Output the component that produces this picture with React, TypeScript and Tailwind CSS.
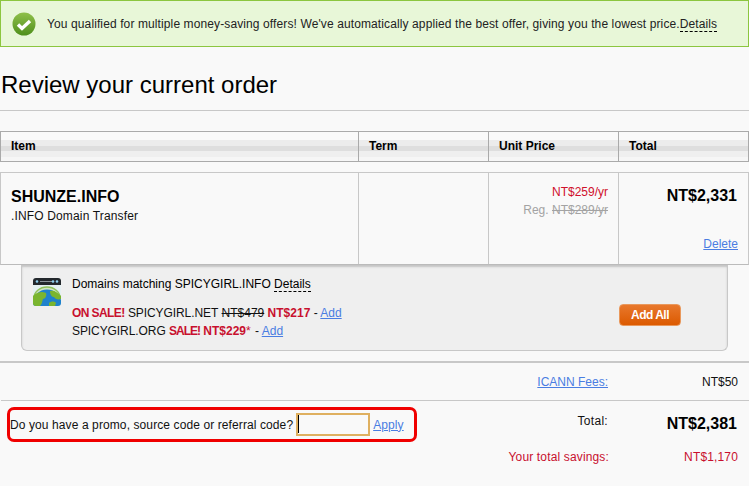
import React from "react";

const CheckIcon = () => (
  <svg width="24" height="24" viewBox="0 0 24 24">
    <defs>
      <linearGradient id="chk" x1="0" y1="0" x2="0" y2="1">
        <stop offset="0" stopColor="#8fc04a" />
        <stop offset="1" stopColor="#4f8f1c" />
      </linearGradient>
    </defs>
    <circle cx="12" cy="12" r="11.5" fill="url(#chk)" />
    <path d="M6 12.5l4 4 8-7.5" fill="none" stroke="#fff" strokeWidth="3.4" />
  </svg>
);

const GlobeIcon = () => (
  <svg width="28" height="28" viewBox="0 0 28 28">
    <defs>
      <clipPath id="win">
        <rect x="0" y="0" width="28" height="28" rx="3" />
      </clipPath>
    </defs>
    <g clipPath="url(#win)">
      <rect width="28" height="28" fill="#e4f0f2" />
      <rect width="28" height="7" fill="#23282c" />
      <circle cx="4" cy="3.5" r="1.3" fill="#8fd0f0" />
      <rect x="7" y="3" width="12" height="1" fill="#8a9398" />
      <circle cx="20" cy="3.5" r="1.3" fill="#8fd0f0" />
      <circle cx="24" cy="3.5" r="1.3" fill="#8fd0f0" />
      <path d="M1 20a13 11 0 0 1 26 0" fill="#cfe5c0" stroke="#8fc25a" strokeWidth="1.5" />
      <circle cx="14" cy="26" r="14.5" fill="#1f82cc" />
      <path d="M0 18c4-4 9-5 13-3 1 3-1 6-3 6-1 3-1 5-3 7H0zM17 13c4-1 7 1 11 5v3c-3 1-6 0-7-2-2 0-4-2-4-6zM16 25c2-2 6-2 7 0l-1 3h-6z" fill="#7ab52f" />
    </g>
  </svg>
);

const Link = ({ children }: { children: React.ReactNode }) => (
  <a className="text-[#4a7de2] underline cursor-pointer">{children}</a>
);

const Details = () => (
  <span className="border-b border-dashed border-black leading-[13px] inline-block">Details</span>
);

export default function App() {
  return (
    <div className="w-[749px] h-[486px] overflow-hidden bg-[#f9f9f9] text-[12px] text-[#111] font-['Liberation_Sans',Arial,sans-serif]">
      {/* offer banner */}
      <div className="h-[47px] flex items-center bg-[#e8f7d8] border border-[#8cc63f] pl-[11px] text-[#222] tracking-[0.11px]">
        <CheckIcon />
        <span className="ml-[11px] whitespace-nowrap">
          You qualified for multiple money-saving offers! We've automatically applied the best offer, giving you the lowest price.
          <Details />
        </span>
      </div>

      <h1 className="mt-[24px] h-[39px] pl-[1px] text-[24px] leading-[28px] text-black">Review your current order</h1>
      <div className="border-t border-[#c8c8c8]" />

      {/* table header */}
      <div className="mt-[20px] h-[31px] grid grid-cols-[357px_130px_130px_1fr] border border-[#aaa] font-bold text-black bg-[linear-gradient(#f9f9f9_0,#f9f9f9_8px,#ececec_8px,#ececec_14px,#dedede_14px,#dedede_19px,#efefef_19px,#efefef_25px,#f6f6f6_25px,#f6f6f6_100%)]">
        <div className="pl-[10px] pt-[5px]">Item</div>
        <div className="pl-[10px] pt-[5px] border-l border-[#aaa]">Term</div>
        <div className="pl-[10px] pt-[5px] border-l border-[#aaa]">Unit Price</div>
        <div className="pl-[10px] pt-[5px] border-l border-[#aaa]">Total</div>
      </div>

      {/* order row */}
      <div className="mt-[10px] h-[93px] grid grid-cols-[357px_130px_130px_1fr] border border-[#c8c8c8] border-b-[#bbb]">
        <div className="pl-[10px] pt-[15px]">
          <div className="text-[16px] leading-[18px] font-bold text-black">SHUNZE.INFO</div>
          <div className="mt-[2px] leading-[16px] tracking-[0.15px]">.INFO Domain Transfer</div>
        </div>
        <div className="border-l border-[#c8c8c8]" />
        <div className="border-l border-[#c8c8c8] pr-[10px] pt-[10px] text-right leading-[18px]">
          <div className="text-[#d0102c]">NT$259/yr</div>
          <div className="text-[#a3a3a3]">
            Reg. <span className="line-through">NT$289/yr</span>
          </div>
        </div>
        <div className="border-l border-[#c8c8c8] pr-[10px] pt-[14px] text-right flex flex-col">
          <div className="pr-[1px] text-[16px] leading-[18px] font-bold text-black">NT$2,331</div>
          <div className="mt-[31px] leading-[16px]">
            <Link>Delete</Link>
          </div>
        </div>
      </div>

      {/* upsell */}
      <div className="ml-[21px] w-[707px] h-[86px] relative flex bg-[#efefef] border border-t-0 border-[#c8c8c8] rounded-b-[6px] shadow-[inset_0_2px_2px_#c4c4c4] pl-[11px] pt-[13px]">
        <GlobeIcon />
        <div className="ml-[11px] leading-[18px] -mt-[3px]">
          <div className="text-black">
            Domains matching SPICYGIRL.INFO <Details />
          </div>
          <div className="mt-[11px]">
            <b className="text-[#c8102e] tracking-[-0.6px]">ON SALE!</b> <span className="tracking-[-0.08px]">SPICYGIRL.NET</span>{" "}
            <span className="line-through">NT$479</span> <b className="text-[#c8102e]">NT$217</b> - <Link>Add</Link>
          </div>
          <div>
            <span className="tracking-[-0.08px]">SPICYGIRL.ORG</span> <b className="text-[#c8102e] tracking-[-1px]">SALE!</b>{" "}
            <b className="text-[#c8102e]">NT$229</b>
            <span className="text-[#c8102e] mr-[1px]">*</span> - <Link>Add</Link>
          </div>
        </div>
        <button className="absolute left-[597px] top-[39px] w-[62px] h-[22px] rounded-[4px] border border-[#e9985c] bg-[linear-gradient(#e8782c,#dc5a00)] text-white font-bold tracking-[-0.5px]">
          Add All
        </button>
      </div>

      {/* totals */}
      <div className="mt-[10px] border-t-[2px] border-[#c8c8c8] h-[39px] flex items-center justify-end pr-[11px]">
        <Link>ICANN Fees:</Link>
        <span className="w-[130px] text-right">NT$50</span>
      </div>
      <div className="ml-[1px] border-t border-[#c8c8c8] relative h-[84px]">
        <div className="absolute left-[6px] top-[6px] w-[410px] h-[35px] rounded-[7px] border-[3px] border-[#f00000] flex items-center whitespace-nowrap tracking-[0.1px]">
          Do you have a promo, source code or referral code?
          <div className="relative ml-[3px] w-[74px] h-[23px]">
            <input className="w-full h-full border-2 border-[#dfb060] bg-[#f9f9f9] outline-none" />
            <div className="absolute left-[2px] top-[2px] w-[1px] h-[18px] bg-black" />
          </div>
          <span className="ml-[3px]">
            <Link>Apply</Link>
          </span>
        </div>
        <div className="absolute right-[12px] top-[13px] w-[200px] flex items-start justify-end">
          <span className="leading-[14px] tracking-[0.3px]">Total:</span>
          <span className="w-[129px] pt-[1px] text-right text-[16px] leading-[18px] font-bold text-black">NT$2,381</span>
        </div>
        <div className="absolute right-[11px] top-[49px] flex text-[#c8102e] leading-[14px] tracking-[0.15px]">
          <span>Your total savings:</span>
          <span className="w-[129px] text-right">NT$1,170</span>
        </div>
      </div>
    </div>
  );
}
